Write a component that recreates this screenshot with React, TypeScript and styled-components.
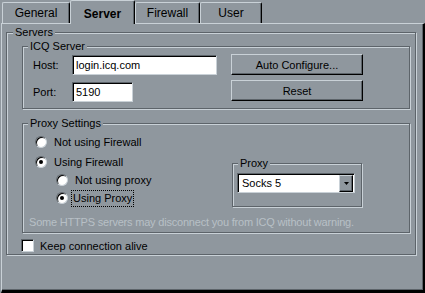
import styled, { createGlobalStyle } from 'styled-components';

const BG = '#8f979e';
const LIGHT = '#c9d1d7';
const DARK = '#5d646a';
const HINT = '#b8c0c6';

const GlobalStyle = createGlobalStyle`
  html, body {
    margin: 0;
    padding: 0;
    background: ${BG};
  }
  body {
    font-family: "Liberation Sans", Arial, sans-serif;
    font-size: 11px;
    color: #000;
  }
  * {
    box-sizing: border-box;
  }
`;

interface TabProps {
  $active?: boolean;
  $width: number;
}

interface IndentProps {
  $indent?: number;
}

interface SizeProps {
  $width: number;
  $height: number;
}

const Window = styled.div`
  width: 425px;
  height: 293px;
  background: ${BG};
  overflow: hidden;
`;

const TabStrip = styled.div`
  display: flex;
  align-items: flex-end;
  height: 23px;
  padding-left: 2px;
  position: relative;
  z-index: 1;
`;

const Tab = styled.div<TabProps>`
  width: ${(p) => p.$width}px;
  height: ${(p) => (p.$active ? 24 : 21)}px;
  margin-bottom: ${(p) => (p.$active ? -1 : 0)}px;
  padding-top: ${(p) => (p.$active ? 2 : 0)}px;
  background: ${BG};
  border-top: 1px solid ${LIGHT};
  border-left: 1px solid ${LIGHT};
  border-right: 1px solid #000;
  box-shadow: inset -1px 0 0 ${DARK};
  border-radius: 2px 2px 0 0;
  display: flex;
  align-items: center;
  justify-content: center;
  font-size: 12px;
  font-weight: ${(p) => (p.$active ? 'bold' : 'normal')};
`;

const Panel = styled.div`
  margin-left: 1px;
  height: 270px;
  border-top: 1px solid ${LIGHT};
  border-left: 1px solid ${LIGHT};
  border-right: 2px solid #000;
  border-bottom: 3px solid #000;
  box-shadow: inset -1px -1px 0 ${DARK};
  padding: 8px 0 0 4px;
`;

const GroupBox = styled.div<SizeProps>`
  position: relative;
  width: ${(p) => p.$width}px;
  height: ${(p) => p.$height}px;
  border: 1px solid ${DARK};
  box-shadow: inset 1px 1px 0 ${LIGHT}, 1px 1px 0 ${LIGHT};
`;

const Caption = styled.span<{ $left?: number }>`
  position: absolute;
  top: -7px;
  left: ${(p) => p.$left ?? 6}px;
  padding: 0 2px;
  line-height: 13px;
  background: ${BG};
  white-space: nowrap;
`;

const ServersBody = styled.div`
  padding: 13px 0 0 15px;
`;

const IcqBody = styled.div`
  display: flex;
  padding: 8px 0 0 10px;
`;

const FieldColumn = styled.div`
  width: 198px;
  display: flex;
  flex-direction: column;
  gap: 7px;
`;

const FieldRow = styled.div`
  display: flex;
  align-items: center;
  height: 20px;
`;

const FieldLabel = styled.span`
  width: 39px;
`;

const TextBox = styled.div<{ $width: number }>`
  width: ${(p) => p.$width}px;
  height: 20px;
  background: #fff;
  border: 1px solid ${LIGHT};
  border-top-color: ${DARK};
  border-left-color: ${DARK};
  box-shadow: inset 1px 1px 0 #000;
  padding: 0 3px;
  display: flex;
  align-items: center;
  white-space: nowrap;
`;

const ButtonColumn = styled.div`
  display: flex;
  flex-direction: column;
  gap: 5px;
  margin-top: -1px;
`;

const PushButton = styled.div`
  width: 132px;
  height: 21px;
  background: ${BG};
  border: 1px solid #000;
  border-top-color: ${LIGHT};
  border-left-color: ${LIGHT};
  box-shadow: inset -1px -1px 0 ${DARK};
  display: flex;
  align-items: center;
  justify-content: center;
`;

const ProxySettingsBox = styled(GroupBox)`
  margin-top: 14px;
`;

const ProxySettingsBody = styled.div`
  padding: 9px 0 0 6px;
`;

const ProxyRow = styled.div`
  display: flex;
`;

const RadioColumn = styled.div`
  width: 203px;
  padding-left: 6px;
  display: flex;
  flex-direction: column;
`;

const RadioRow = styled.div<IndentProps>`
  display: flex;
  align-items: center;
  height: 18px;
  padding-left: ${(p) => p.$indent ?? 0}px;
  &:first-child {
    margin-bottom: 2px;
  }
`;

const RadioCircle = styled.span<{ $checked?: boolean }>`
  position: relative;
  flex: 0 0 12px;
  width: 12px;
  height: 12px;
  border-radius: 50%;
  background: #fff;
  border: 1px solid ${LIGHT};
  border-top-color: ${DARK};
  border-left-color: ${DARK};
  box-shadow: inset 1px 1px 0 #000;
  &::after {
    content: '';
    display: ${(p) => (p.$checked ? 'block' : 'none')};
    position: absolute;
    left: 3px;
    top: 3px;
    width: 4px;
    height: 4px;
    border-radius: 50%;
    background: #000;
  }
`;

const OptionText = styled.span<{ $focused?: boolean }>`
  margin-left: ${(p) => (p.$focused ? 3 : 5)}px;
  padding: 0 1px;
  line-height: 15px;
  border: 1px dotted ${(p) => (p.$focused ? '#000' : 'transparent')};
  white-space: nowrap;
`;

const ProxyBox = styled(GroupBox)`
  margin-top: 30px;
`;

const Select = styled.div`
  margin: 9px 0 0 4px;
  width: 118px;
  height: 20px;
  background: #fff;
  border: 1px solid ${LIGHT};
  border-top-color: ${DARK};
  border-left-color: ${DARK};
  box-shadow: inset 1px 1px 0 #000;
  display: flex;
  align-items: center;
  padding: 1px 1px 1px 4px;
`;

const SelectValue = styled.span`
  flex: 1;
`;

const ArrowButton = styled.span`
  width: 14px;
  height: 17px;
  background: ${BG};
  border: 1px solid #000;
  border-top-color: ${LIGHT};
  border-left-color: ${LIGHT};
  box-shadow: inset -1px -1px 0 ${DARK};
  display: flex;
  align-items: center;
  justify-content: center;
`;

const Hint = styled.div`
  margin-top: 9px;
  line-height: 13px;
  letter-spacing: -0.2px;
  color: ${HINT};
  white-space: nowrap;
`;

const CheckRow = styled.div`
  display: flex;
  align-items: center;
  height: 13px;
  margin: 6px 0 0 -1px;
`;

const CheckBox = styled.span`
  width: 13px;
  height: 13px;
  background: #fff;
  border: 1px solid ${LIGHT};
  border-top-color: ${DARK};
  border-left-color: ${DARK};
  box-shadow: inset 1px 1px 0 #000;
`;

const CheckText = styled.span`
  margin-left: 6px;
`;

const tabs = [
  { label: 'General', width: 68 },
  { label: 'Server', width: 65, active: true },
  { label: 'Firewall', width: 65 },
  { label: 'User', width: 62 },
];

export default function App() {
  return (
    <Window>
      <GlobalStyle />
      <TabStrip>
        {tabs.map((t) => (
          <Tab key={t.label} $width={t.width} $active={t.active}>
            {t.label}
          </Tab>
        ))}
      </TabStrip>
      <Panel>
        <GroupBox $width={410} $height={223}>
          <Caption>Servers</Caption>
          <ServersBody>
            <GroupBox $width={388} $height={63}>
              <Caption $left={5}>ICQ Server</Caption>
              <IcqBody>
                <FieldColumn>
                  <FieldRow>
                    <FieldLabel>Host:</FieldLabel>
                    <TextBox $width={145}>login.icq.com</TextBox>
                  </FieldRow>
                  <FieldRow>
                    <FieldLabel>Port:</FieldLabel>
                    <TextBox $width={61}>5190</TextBox>
                  </FieldRow>
                </FieldColumn>
                <ButtonColumn>
                  <PushButton>Auto Configure...</PushButton>
                  <PushButton>Reset</PushButton>
                </ButtonColumn>
              </IcqBody>
            </GroupBox>

            <ProxySettingsBox $width={388} $height={110}>
              <Caption $left={5}>Proxy Settings</Caption>
              <ProxySettingsBody>
                <ProxyRow>
                  <RadioColumn>
                    <RadioRow>
                      <RadioCircle />
                      <OptionText>Not using Firewall</OptionText>
                    </RadioRow>
                    <RadioRow>
                      <RadioCircle $checked />
                      <OptionText>Using Firewall</OptionText>
                    </RadioRow>
                    <RadioRow $indent={21}>
                      <RadioCircle />
                      <OptionText>Not using proxy</OptionText>
                    </RadioRow>
                    <RadioRow $indent={21}>
                      <RadioCircle $checked />
                      <OptionText $focused>Using Proxy</OptionText>
                    </RadioRow>
                  </RadioColumn>
                  <ProxyBox $width={130} $height={44}>
                    <Caption $left={5}>Proxy</Caption>
                    <Select>
                      <SelectValue>Socks 5</SelectValue>
                      <ArrowButton>
                        <svg width="5" height="3" viewBox="0 0 5 3">
                          <path d="M0 0h5L2.5 3z" fill="#000" />
                        </svg>
                      </ArrowButton>
                    </Select>
                  </ProxyBox>
                </ProxyRow>
                <Hint>Some HTTPS servers may disconnect you from ICQ without warning.</Hint>
              </ProxySettingsBody>
            </ProxySettingsBox>

            <CheckRow>
              <CheckBox />
              <CheckText>Keep connection alive</CheckText>
            </CheckRow>
          </ServersBody>
        </GroupBox>
      </Panel>
    </Window>
  );
}
